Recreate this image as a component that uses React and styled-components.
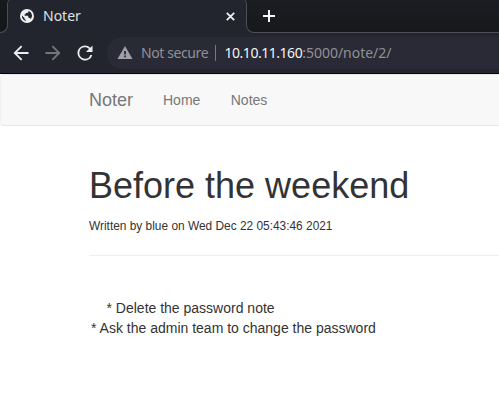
import React from "react";
import styled, { createGlobalStyle } from "styled-components";

const GlobalStyle = createGlobalStyle`
  * { box-sizing: border-box; }
  html, body { margin: 0; padding: 0; background: #fff; }
  body { overflow: hidden; }
`;

const Window = styled.div`
  width: 499px;
  height: 406px;
  overflow: hidden;
  background: #fff;
`;

const BrowserChrome = styled.header`
  height: 74px;
  background: #23252e;
  border-bottom: 1px solid #050507;
  font-family: "Noto Sans", sans-serif;
`;

const TabStrip = styled.div`
  display: flex;
  height: 33px;
  overflow: hidden;
`;

const StripEdge = styled.div`
  flex: none;
  width: 8px;
  background: linear-gradient(#191a1e, #15161a);
  border: solid #4d4f54;
  border-width: 0 1px 1px 0;
  border-bottom-right-radius: 8px;
`;

const StripRest = styled.div`
  flex: 1;
  display: flex;
  align-items: center;
  padding-left: 16px;
  background: linear-gradient(#1c1d22, #17181b);
  border: solid #4d4f54;
  border-width: 0 0 1px 1px;
  border-bottom-left-radius: 8px;
`;

const Tab = styled.div`
  position: relative;
  flex: none;
  display: flex;
  align-items: center;
  width: 238px;
  padding: 0 11px 1px 12px;

  &::before,
  &::after {
    content: "";
    position: absolute;
    top: 0;
    width: 6px;
    height: 4px;
  }
  &::before {
    left: -1px;
    background: radial-gradient(circle at 8px 5px, transparent 7px, #4d4f54 7.5px, #1b1c20 8.5px);
  }
  &::after {
    right: -1px;
    background: radial-gradient(circle at -2px 5px, transparent 7px, #4d4f54 7.5px, #1b1c20 8.5px);
  }
`;

const TabTitle = styled.span`
  flex: 1;
  margin-left: 9px;
  color: #dfe0e3;
  font-size: 14px;
  line-height: 20px;
`;

const Toolbar = styled.div`
  display: flex;
  align-items: center;
  height: 40px;
  padding: 4px 0 4px 13px;
`;

const NavIcon = styled.svg`
  flex: none;
  display: block;
  margin-right: 16px;
`;

const AddressBar = styled.div`
  flex: 1;
  display: flex;
  align-items: center;
  height: 32px;
  margin-left: -2px;
  padding-left: 10px;
  border-radius: 16px 0 0 16px;
  background: #292a35;
  font-size: 14px;
  line-height: 20px;
  color: #8f9196;
  white-space: nowrap;
`;

const Security = styled.span`
  width: 74px;
  margin-left: 8px;
  letter-spacing: -0.4px;
`;

const Divider = styled.span`
  width: 1px;
  height: 16px;
  margin-right: 8.5px;
  background: #777982;
`;

const Address = styled.span`
  letter-spacing: -0.02px;
`;

const Host = styled.span`
  color: #f4f4f6;
  letter-spacing: -0.47px;
`;

const Page = styled.div`
  font-family: "Liberation Sans", Arial, sans-serif;
  font-size: 14px;
  line-height: 20px;
  color: #333;
`;

const Navbar = styled.nav`
  display: flex;
  align-items: center;
  height: 52px;
  padding-left: 89px;
  background: #f8f8f8;
  border: 1px solid #e7e7e7;
  border-right: 0;
  border-left-color: #f0f0f0;
  border-radius: 4px 0 0 4px;
  color: #777;
`;

const Brand = styled.span`
  margin-left: -1px;
  width: 74px;
  font-size: 18px;
`;

const NavLink = styled.span`
  margin-right: 30.4px;
`;

const Article = styled.article`
  padding: 40px 0 0 89px;
`;

const Title = styled.h1`
  margin: 0 0 10px;
  font-size: 36px;
  font-weight: 500;
  line-height: 39.6px;
`;

const Byline = styled.small`
  display: block;
  font-size: 11.9px;
  line-height: 20px;
`;

const Rule = styled.hr`
  margin: 19px 0 42px;
  border: 0;
  border-top: 1px solid #eee;
`;

const NoteLine = styled.div`
  padding-left: ${({ $indent }) => $indent}px;
`;

export default function App() {
  return (
    <Window>
      <GlobalStyle />
      <BrowserChrome>
        <TabStrip>
          <StripEdge />
          <Tab>
            <svg width="14" height="14" viewBox="0 0 14 14">
              <circle cx="7" cy="7" r="7" fill="#eeeeef" />
              <path
                d="M8.2 1.6 8.8 2.8 7.3 4.1H5.7V5.2H4.6V6.8H8.2V8.2L9.3 9H10.2V10.3L11.8 8.3 12 6 10.9 3.4Z M1.9 6.4 4.5 9V10L5.8 11.1V12L3.7 10.9 2.1 8.8Z"
                fill="#23252e"
              />
            </svg>
            <TabTitle>Noter</TabTitle>
            <svg width="9" height="9" viewBox="0 0 9 9" stroke="#ededf0" strokeWidth="1.8">
              <path d="M.8.8 8.2 8.2M8.2.8.8 8.2" />
            </svg>
          </Tab>
          <StripRest>
            <svg width="12" height="12" viewBox="0 0 12 12" fill="#f5f5f5">
              <path d="M5 0h2v5h5v2H7v5H5V7H0V5h5z" />
            </svg>
          </StripRest>
        </TabStrip>
        <Toolbar>
          <NavIcon width="16" height="16" viewBox="3.5 3.5 17 17" fill="#ececef">
            <path d="M20 11H7.83l5.59-5.59L12 4l-8 8 8 8 1.41-1.41L7.83 13H20z" />
          </NavIcon>
          <NavIcon width="16" height="16" viewBox="3.5 3.5 17 17" fill="#75767c">
            <path d="m12 4-1.41 1.41L16.17 11H4v2h12.17l-5.58 5.59L12 20l8-8z" />
          </NavIcon>
          <NavIcon width="16" height="16" viewBox="3.5 3.5 17 17" fill="#ececef">
            <path d="M17.65 6.35A7.958 7.958 0 0 0 12 4a8 8 0 1 0 7.73 10h-2.08A6 6 0 1 1 12 6c1.66 0 3.14.69 4.22 1.78L13 11h7V4z" />
          </NavIcon>
          <AddressBar>
            <svg width="16" height="14" viewBox="0 0 16 14">
              <path d="M8 0 .5 13h15z" fill="#9ea0a6" />
              <path d="M7.1 5h1.8v3.4H7.1zM7.1 9.5h1.8v1.8H7.1z" fill="#292a35" />
            </svg>
            <Security>Not secure</Security>
            <Divider />
            <Address><Host>10.10.11.160</Host>:5000/note/2/</Address>
          </AddressBar>
        </Toolbar>
      </BrowserChrome>
      <Page>
        <Navbar>
          <Brand>Noter</Brand>
          <NavLink>Home</NavLink>
          <NavLink>Notes</NavLink>
        </Navbar>
        <Article>
          <Title>Before the weekend</Title>
          <Byline>Written by blue on Wed Dec 22 05:43:46 2021</Byline>
          <Rule />
          <NoteLine $indent={17.5}>* Delete the password note</NoteLine>
          <NoteLine $indent={2}>* Ask the admin team to change the password</NoteLine>
        </Article>
      </Page>
    </Window>
  );
}
